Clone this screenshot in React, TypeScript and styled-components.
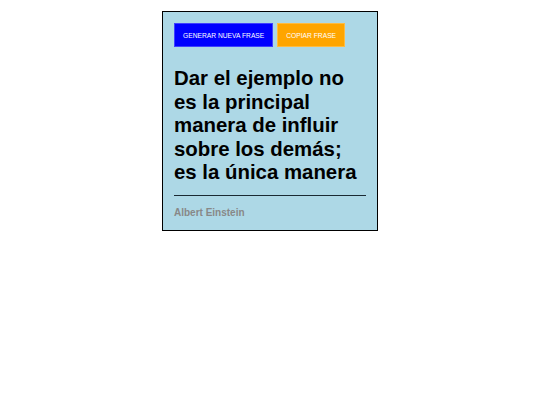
import React from "react";
import styled, { createGlobalStyle } from "styled-components";

const Global = createGlobalStyle`
  html, body { margin: 0; padding: 0; background: #fff; }
  body { font-family: "Liberation Sans", Arial, sans-serif; }
`;

const Page = styled.div`
  display: flex;
  justify-content: center;
  padding-top: 11px;
`;

const Card = styled.div`
  width: 192px;
  padding: 11px 11px 11px;
  background: #add8e6;
  border: 1px solid #000;
`;

const Toolbar = styled.div`
  display: flex;
  gap: 4px;
`;

const Button = styled.button<{ $bg: string }>`
  height: 24px;
  padding: 0 8px;
  background: ${(p) => p.$bg};
  color: #fff;
  border: 1px solid rgba(255, 255, 255, 0.25);
  font-family: "Liberation Sans", Arial, sans-serif;
  font-size: 6.7px;
  text-transform: uppercase;
  cursor: pointer;
`;

const Quote = styled.p`
  margin: 20px 0 0;
  font-size: 20.4px;
  line-height: 23.5px;
  font-weight: bold;
  color: #000;
`;

const Rule = styled.hr`
  margin: 10px 0 0;
  border: none;
  border-top: 1px solid #1a2a33;
`;

const Author = styled.p`
  margin: 11px 0 0;
  font-size: 10px;
  line-height: 12px;
  font-weight: bold;
  color: #888;
`;

export default function App() {
  return (
    <>
      <Global />
      <Page>
        <Card>
          <Toolbar>
            <Button $bg="#0000ff">Generar nueva frase</Button>
            <Button $bg="#ffa500">Copiar frase</Button>
          </Toolbar>
          <Quote>Dar el ejemplo no es la principal manera de influir sobre los demás; es la única manera</Quote>
          <Rule />
          <Author>Albert Einstein</Author>
        </Card>
      </Page>
    </>
  );
}
